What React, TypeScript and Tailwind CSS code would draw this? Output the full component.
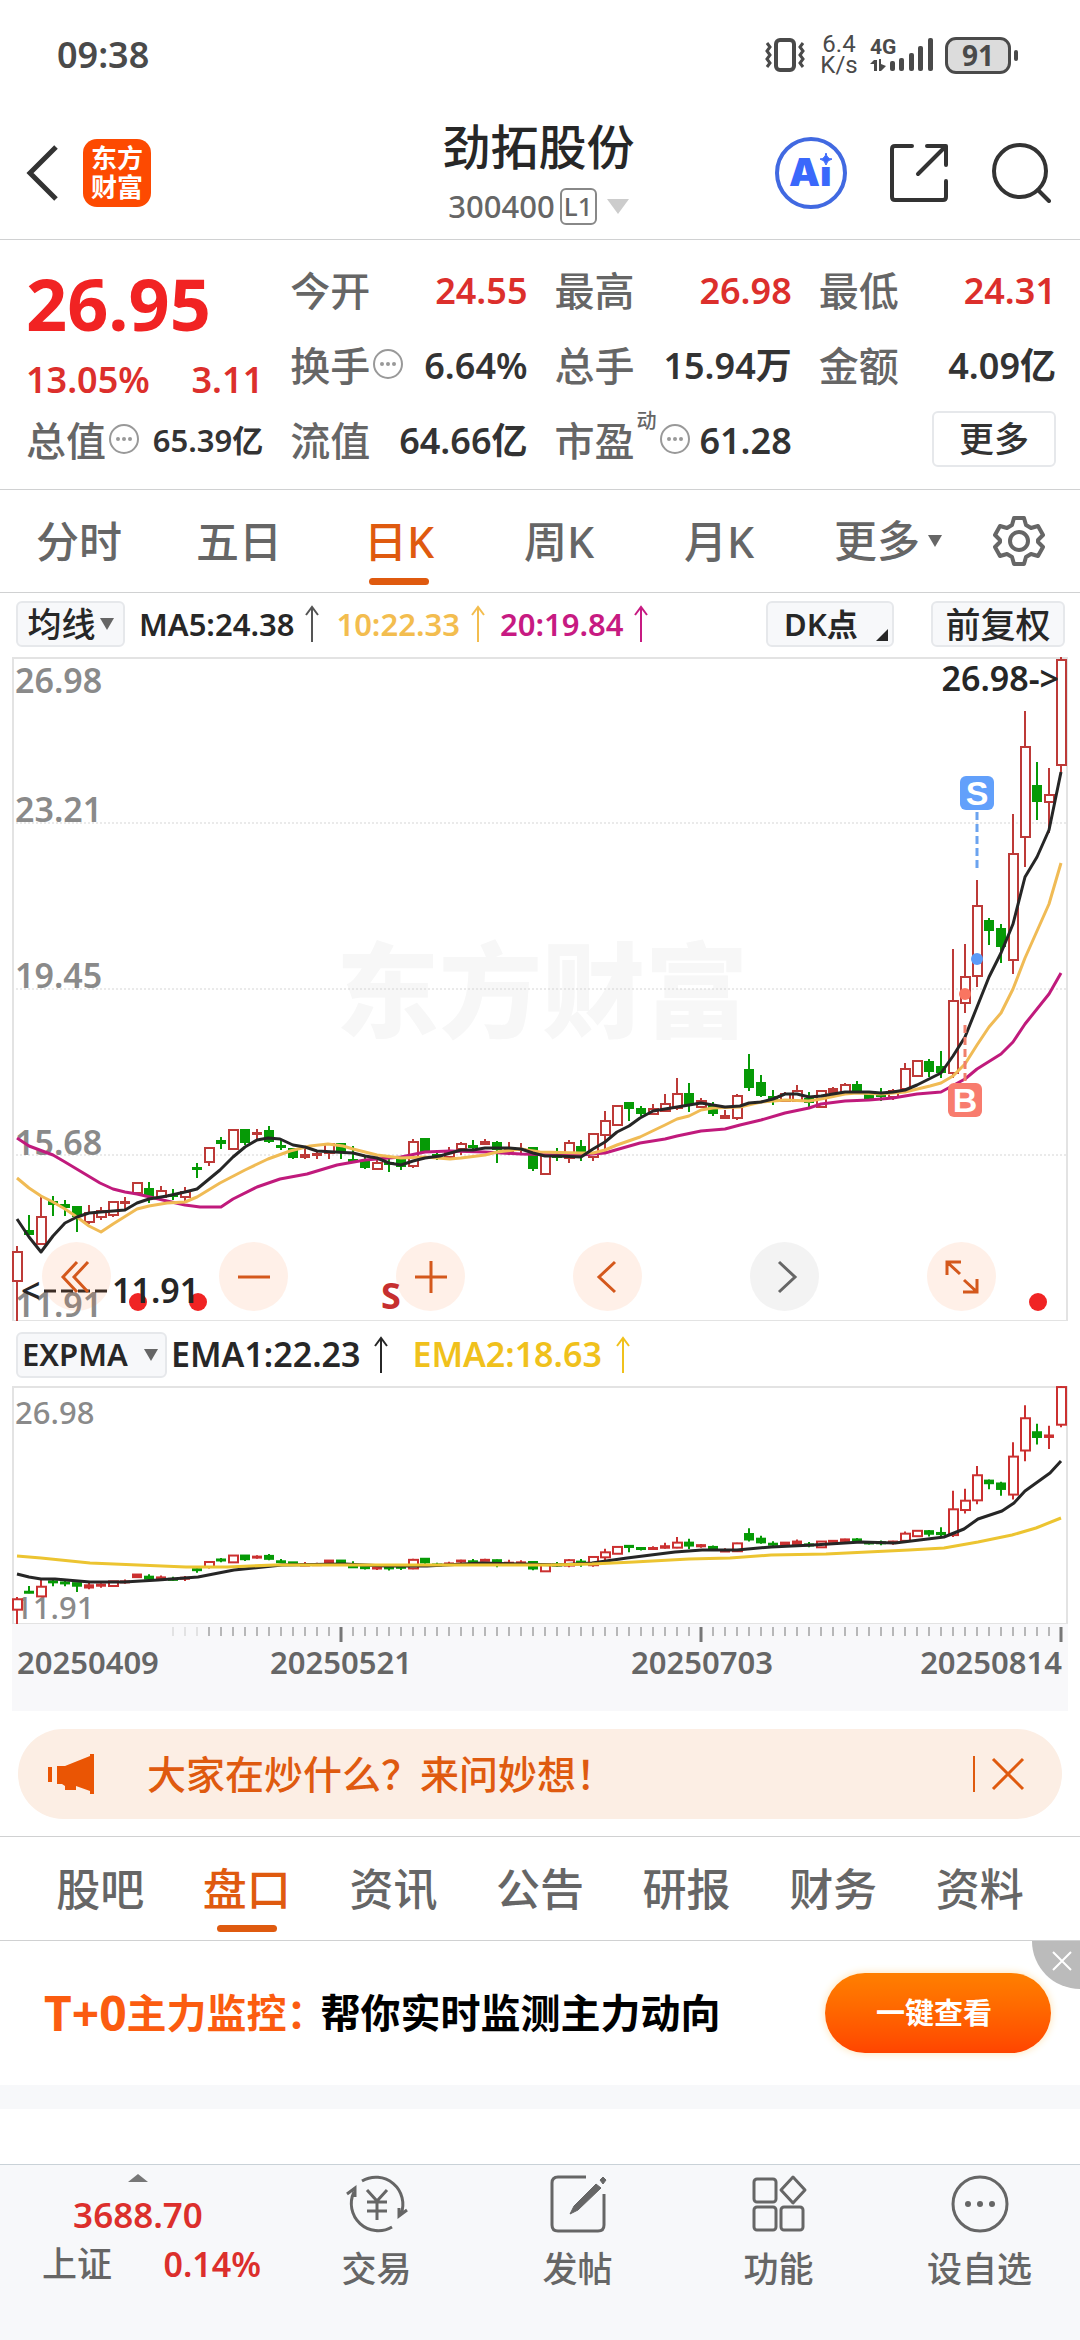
import { useState } from 'react'
import type { ReactNode } from 'react'
import { clsx } from 'clsx'

// up/down flag followed by high, body top, body bottom, low (px below the top of the price pane)
type Candle = ['u' | 'd', number, number, number, number]

const PANE_H = 664
const SUB_H = 238

const candles: Candle[] = [
  ['u', 589, 595, 624, 664], ['d', 558, 574, 578, 578], ['u', 540, 560, 587, 587], ['d', 539, 545, 548, 559],
  ['d', 543, 548, 551, 559], ['d', 550, 550, 560, 575], ['u', 548, 556, 565, 567], ['u', 550, 554, 560, 563],
  ['u', 545, 545, 558, 560], ['u', 540, 545, 547, 552], ['u', 525, 526, 536, 536], ['d', 525, 532, 540, 546],
  ['u', 529, 534, 540, 541], ['d', 532, 538, 540, 543], ['u', 530, 535, 540, 544], ['d', 506, 511, 513, 521],
  ['u', 491, 491, 505, 509], ['d', 480, 484, 487, 492], ['u', 473, 473, 492, 492], ['d', 473, 473, 486, 488],
  ['u', 472, 476, 478, 482], ['d', 469, 474, 485, 486], ['d', 483, 489, 491, 493], ['d', 492, 492, 501, 502],
  ['u', 491, 498, 501, 502], ['u', 493, 497, 499, 502], ['u', 487, 487, 496, 502], ['d', 487, 487, 496, 502],
  ['d', 489, 503, 505, 506], ['d', 500, 505, 511, 512], ['u', 502, 506, 512, 513], ['d', 500, 506, 508, 515],
  ['d', 501, 503, 510, 513], ['u', 482, 485, 509, 511], ['d', 482, 482, 495, 496], ['d', 493, 498, 500, 503],
  ['u', 490, 495, 500, 501], ['u', 485, 487, 492, 498], ['d', 483, 489, 491, 494], ['u', 482, 485, 488, 488],
  ['d', 484, 486, 493, 506], ['u', 485, 493, 495, 498], ['u', 486, 492, 494, 497], ['d', 490, 491, 512, 514],
  ['u', 498, 498, 517, 517], ['d', 491, 498, 501, 504], ['u', 483, 486, 501, 506], ['d', 483, 490, 495, 504],
  ['u', 477, 477, 500, 504], ['u', 454, 464, 478, 497], ['u', 449, 449, 468, 469], ['d', 445, 446, 452, 464],
  ['d', 449, 452, 457, 459], ['u', 447, 452, 457, 457], ['u', 437, 447, 454, 454], ['u', 421, 437, 451, 453],
  ['d', 426, 437, 448, 455], ['u', 441, 444, 450, 451], ['d', 445, 449, 457, 459], ['u', 453, 459, 462, 462],
  ['u', 437, 439, 461, 463], ['d', 397, 413, 431, 434], ['d', 418, 426, 439, 440], ['d', 433, 440, 443, 448],
  ['u', 435, 437, 444, 445], ['u', 428, 434, 444, 445], ['d', 435, 442, 446, 450], ['u', 434, 434, 450, 450],
  ['u', 430, 432, 436, 436], ['u', 426, 428, 435, 435], ['d', 424, 428, 435, 435], ['d', 435, 436, 442, 442],
  ['d', 431, 436, 440, 444], ['u', 432, 434, 440, 443], ['u', 406, 412, 432, 432], ['u', 404, 404, 419, 419],
  ['d', 402, 405, 415, 420], ['d', 394, 410, 416, 421], ['u', 292, 344, 416, 421], ['u', 287, 320, 346, 356],
  ['u', 223, 249, 319, 330], ['d', 261, 264, 274, 288], ['d', 267, 272, 290, 306], ['u', 157, 197, 303, 317],
  ['u', 54, 90, 180, 210], ['d', 105, 129, 145, 163], ['u', 111, 138, 145, 176], ['u', 0, 3, 108, 115],
]

const ma5 =
  '17,562 29,580 41,595 53,579 65,566 77,560 89,556 101,555 125,553 137,546 149,542 167,539 185,535 197,532 220,513 233,500 245,490 257,483 268,481 280,482 293,488 305,490 317,494 353,496 365,499 377,501 389,506 401,508 413,504 425,501 440,499 461,493 473,493 485,491 509,491 521,492 533,496 545,499 557,499 581,500 593,492 605,485 617,475 629,469 640,461 653,454 665,452 677,450 689,448 701,446 713,448 725,450 740,449 749,446 761,445 773,442 785,437 797,437 809,440 821,439 833,437 845,435 869,435 881,436 893,435 905,433 917,428 941,416 953,399 965,380 977,350 989,320 1001,296 1013,267 1025,220 1037,200 1049,173 1061,115'
const ma10 =
  '17,521 29,531 41,539 53,545 65,552 77,560 89,569 101,575 113,567 137,552 149,549 167,546 185,545 197,540 220,526 245,513 268,502 290,494 310,489 328,487 343,489 353,492 377,498 401,501 425,500 450,502 461,501 485,498 497,495 521,492 540,495 581,496 593,496 605,493 617,488 640,480 665,468 677,462 689,459 701,453 713,451 740,450 761,445 785,443 809,444 821,442 845,437 857,436 881,437 905,435 930,429 941,426 953,419 965,407 977,388 989,370 1001,356 1013,332 1025,301 1049,247 1061,206'
const ma20 =
  '17,481 29,489 53,498 65,505 100,526 113,532 125,535 137,537 150,540 167,544 185,548 200,550 221,550 233,542 257,530 280,522 307,517 337,508 365,503 401,500 425,495 450,494 485,495 521,497 557,498 581,498 605,496 640,486 665,482 677,479 701,474 725,472 740,468 761,463 785,456 809,451 821,447 845,444 869,443 893,441 917,437 941,435 965,422 977,412 1001,397 1013,385 1025,367 1049,337 1061,316'
const ema1 =
  '17,188 29,191 41,193 55,193 90,196 124,196 158,194 198,191 234,184 282,179 344,178 386,180 427,180 482,177 523,178 558,179 592,177 627,172 675,166 702,164 737,164 771,161 813,159 861,156 895,157 944,151 964,143 978,133 1002,125 1014,117 1025,105 1050,87 1061,75'
const ema2 =
  '17,170 41,172 90,177 138,179 186,181 227,181 275,179 386,179 551,179 592,178 634,176 689,173 730,172 771,169 826,168 909,164 944,162 978,156 1012,149 1036,142 1061,132'

const candleX = (i: number) => 17 + i * 12

const Candles = ({ scale, red }: { scale: number; red: string }) => (
  <>
    {candles.map(([dir, high, top, bottom, low], i) => {
      const x = candleX(i)
      const color = dir === 'u' ? red : '#069a06'
      const y = top * scale
      const h = Math.max((bottom - top) * scale, 2)
      const hollow = dir === 'u' && h > 4
      return (
        <g key={i}>
          <line x1={x} x2={x} y1={high * scale} y2={low * scale} stroke={color} strokeWidth={2} />
          {hollow ? (
            <rect x={x - 4} y={y} width={9} height={h} fill="#fff" stroke={color} strokeWidth={2} />
          ) : (
            <rect x={x - 5} y={y - 1} width={10} height={h + 1} fill={color} />
          )}
        </g>
      )
    })}
  </>
)

const Line = ({ points, color, width = 3 }: { points: string; color: string; width?: number }) => (
  <polyline points={points} fill="none" stroke={color} strokeWidth={width} strokeLinejoin="round" />
)

const UpArrow = ({ className }: { className?: string }) => (
  <svg viewBox="0 0 14 38" className={clsx('w-[14px] h-[38px] shrink-0', className)} fill="none" stroke="currentColor" strokeWidth="2">
    <path d="M7 2V37M1 10l6-8 6 8" />
  </svg>
)

const Caret = ({ className }: { className?: string }) => (
  <svg viewBox="0 0 14 12" className={clsx('w-[14px] h-[12px] shrink-0', className)} fill="currentColor">
    <path d="M0 0h14L7 12z" />
  </svg>
)

const InfoDots = () => (
  <svg viewBox="0 0 30 30" className="mb-1 ml-[3px] w-[30px] h-[30px] shrink-0" fill="none" stroke="#999" strokeWidth="2">
    <circle cx="15" cy="15" r="14" />
    <g fill="#999" stroke="none">
      <circle cx="9" cy="15" r="2" />
      <circle cx="15" cy="15" r="2" />
      <circle cx="21" cy="15" r="2" />
    </g>
  </svg>
)

const StatusBar = () => (
  <div className="flex h-[110px] items-center justify-between pl-[57px] pr-[62px] text-[#4a4a4a]">
    <span className="text-[36px] font-semibold">09:38</span>
    <div className="flex items-center">
      <svg viewBox="0 0 42 36" className="w-[42px] h-[36px]" fill="none" stroke="currentColor">
        <rect x="12" y="3" width="18" height="30" rx="4" strokeWidth="4" />
        <path d="M3 6l3 4-3 4 3 4-3 4 3 4-3 4M39 6l-3 4 3 4-3 4 3 4-3 4 3 4" strokeWidth="3" />
      </svg>
      <div className="ml-4 flex w-[34px] flex-col items-center font-[Roboto] text-[24px] leading-[21px]">
        <span>6.4</span>
        <span>K/s</span>
      </div>
      <div className="ml-[14px] flex h-[36px] flex-col">
        <div className="flex h-full items-end">
          <div className="flex h-full w-[27px] flex-col items-start justify-between">
            <span className="font-[Roboto] text-[21px] font-bold leading-[20px]">4G</span>
            <svg viewBox="0 0 16 12" className="mb-[2px] w-4 h-3" fill="currentColor">
              <path d="M0 5l4-4h3v11H4V5zM9 0h2v5l5 2-5 5H9z" />
            </svg>
          </div>
          <svg viewBox="0 0 44 36" className="w-[44px] h-[36px] -ml-2" fill="currentColor">
            <rect x="1" y="24" width="5" height="10" rx="2" />
            <rect x="10" y="21" width="5" height="13" rx="2" />
            <rect x="20" y="16" width="5" height="18" rx="2" />
            <rect x="29" y="9" width="5" height="25" rx="2" />
            <rect x="39" y="1" width="5" height="33" rx="2" />
          </svg>
        </div>
      </div>
      <div className="ml-3 flex items-center gap-[3px]">
        <div className="flex h-[37px] w-[66px] items-center justify-center rounded-[11px] border-[3px] border-[#4a4a4a] bg-[#dcdcdc] text-[28px] font-bold leading-none">
          91
        </div>
        <div className="h-[11px] w-1 rounded-full bg-[#4a4a4a]" />
      </div>
    </div>
  </div>
)

const Header = () => (
  <header className="grid h-[130px] grid-cols-[1fr_auto_1fr] items-center border-b border-[#d0d1d2] pb-1 pl-[26px] pr-[29px]">
    <div className="flex items-center gap-6">
      <button aria-label="返回">
        <svg viewBox="0 0 33 56" className="w-[33px] h-[56px]" fill="none" stroke="#333" strokeWidth="5">
          <path d="M30 2L4 28l26 26" />
        </svg>
      </button>
      <div className="flex h-[68px] w-[68px] flex-col items-center justify-center rounded-[14px] bg-[#fd4a01] text-[26px] font-bold leading-[29px] text-white">
        <span>东方</span>
        <span>财富</span>
      </div>
    </div>
    <div className="flex flex-col items-center gap-[11px]">
      <h1 className="text-[48px] font-medium leading-[56px] text-[#272727]">劲拓股份</h1>
      <div className="flex h-[40px] items-center text-[31px] font-medium text-[#666]">
        <span>300400</span>
        <span className="ml-[5px] flex h-[37px] w-[37px] items-center justify-center rounded-md border-2 border-[#888] text-[26px]">L1</span>
        <svg viewBox="0 0 22 15" className="ml-[10px] w-[22px] h-[15px]" fill="#ccc">
          <path d="M0 0h22L11 15z" />
        </svg>
      </div>
    </div>
    <div className="flex items-center justify-end gap-[43px]">
      <button aria-label="Ai">
        <svg viewBox="0 0 72 72" className="w-[72px] h-[72px]">
          <circle cx="36" cy="36" r="34" fill="none" stroke="#4169e1" strokeWidth="4" />
          <text x="14" y="49" fontSize="39" fontWeight="900" fill="#3a68fb" className="font-[Inter]">
            Ai
          </text>
          <rect x="43" y="14" width="16" height="16" fill="#fff" />
          <path d="M51 16q1 6 6 6-5 1-6 6-1-5-6-6 5 0 6-6z" fill="#3a68fb" stroke="#3a68fb" />
        </svg>
      </button>
      <button aria-label="分享">
        <svg viewBox="0 0 58 58" className="w-[58px] h-[58px]" fill="none" stroke="#333" strokeWidth="4" strokeLinecap="round" strokeLinejoin="round">
          <path d="M22 2H5Q2 2 2 5v48q0 3 3 3h48q3 0 3-3V37M37 2h19v19M55 3L28 30" />
        </svg>
      </button>
      <button aria-label="搜索">
        <svg viewBox="0 0 60 60" className="w-[60px] h-[60px]" fill="none" stroke="#333" strokeWidth="4" strokeLinecap="round">
          <circle cx="29" cy="28" r="26" />
          <path d="M47 47l11 11" />
        </svg>
      </button>
    </div>
  </header>
)

type StatProps = { label: string; value: string; red?: boolean; info?: boolean; sup?: string; small?: boolean }

const Stat = ({ label, value, red, info, sup, small }: StatProps) => (
  <div className="flex h-[75px] items-center justify-between">
    <div className="flex items-center">
      <span className="text-[40px] text-[#666]">{label}</span>
      {sup && <span className="-mt-10 ml-[2px] text-[20px] text-[#666]">{sup}</span>}
      {info && <InfoDots />}
    </div>
    <span className={clsx('font-semibold', small ? 'text-[31px]' : 'text-[36px]', red ? 'text-[#dc2f2c]' : 'text-[#333]')}>{value}</span>
  </div>
)

const Quote = () => (
  <section className="grid grid-cols-4 gap-x-[27px] border-b border-[#d0d1d2] pb-[11px] pl-[26px] pr-6 pt-[13px] font-medium">
    <div>
      <div className="flex h-[104px] items-center pb-1 text-[72px] font-bold text-[#f12323]">26.95</div>
      <div className="flex h-[46px] items-center justify-between text-[36px] font-semibold text-[#dc2f2c]">
        <span>13.05%</span>
        <span>3.11</span>
      </div>
      <Stat label="总值" value="65.39亿" info small />
    </div>
    <div>
      <Stat label="今开" value="24.55" red />
      <Stat label="换手" value="6.64%" info />
      <Stat label="流值" value="64.66亿" />
    </div>
    <div>
      <Stat label="最高" value="26.98" red />
      <Stat label="总手" value="15.94万" />
      <Stat label="市盈" value="61.28" sup="动" info />
    </div>
    <div>
      <Stat label="最低" value="24.31" red />
      <Stat label="金额" value="4.09亿" />
      <div className="flex h-[75px] items-center justify-end">
        <button className="mb-1 h-[56px] w-[124px] rounded-md border-2 border-[#e6e8eb] text-[35px] leading-none text-[#333]">更多</button>
      </div>
    </div>
  </section>
)

const periods = ['分时', '五日', '日K', '周K', '月K']

const PeriodTabs = () => {
  const [active, setActive] = useState('日K')
  return (
    <nav className="grid h-[103px] grid-cols-[160fr_160fr_160fr_160fr_160fr_176fr_104fr] border-b border-[#d0d1d2] text-[43px] font-medium text-[#666]">
      {periods.map((p) => (
        <button
          key={p}
          onClick={() => setActive(p)}
          className={clsx('flex flex-col items-center justify-end pb-[7px] pr-[2px]', p === active && 'text-[#df5a0f]')}
        >
          <span className="leading-[64px]">{p}</span>
          <span className={clsx('mt-1 h-[7px] w-[60px] rounded-full', p === active && 'bg-[#df5a0f]')} />
        </button>
      ))}
      <button className="flex items-center justify-center gap-2">
        更多
        <Caret />
      </button>
      <button aria-label="设置" className="flex items-center justify-center pr-[18px]">
        <svg viewBox="0 0 52 52" className="w-[52px] h-[52px]" fill="none" stroke="#666" strokeWidth="4" strokeLinejoin="round">
          <path d="M21 3h10l2 7 5 3 7-2 5 9-5 5v2l5 5-5 9-7-2-5 3-2 7H21l-2-7-5-3-7 2-5-9 5-5v-2l-5-5 5-9 7 2 5-3z" />
          <circle cx="26" cy="26" r="9" />
        </svg>
      </button>
    </nav>
  )
}

const chip = 'flex h-[46px] items-center rounded-md border-2 border-[#e6e8eb] bg-[#f7f8fa] leading-none text-[#272727]'

const MaBar = () => (
  <div className="flex h-[64px] items-center pb-1 pl-4 pr-[15px] pt-[2px] text-[31px] font-semibold">
    <button className={clsx(chip, 'w-[109px] justify-center gap-1 text-[34px] font-medium')}>
      均线
      <Caret className="text-[#666]" />
    </button>
    <span className="ml-[14px] text-[#272727]">MA5:24.38</span>
    <UpArrow className="ml-[11px] text-[#555]" />
    <span className="ml-[17px] text-[#f3bd4f]">10:22.33</span>
    <UpArrow className="ml-[11px] text-[#f3bd4f]" />
    <span className="ml-[15px] text-[#c71a82]">20:19.84</span>
    <UpArrow className="ml-[11px] text-[#c71a82]" />
    <button className={clsx(chip, 'ml-auto w-[128px] justify-between pl-4 pr-1')}>
      DK点
      <svg viewBox="0 0 12 12" className="mb-1 w-3 h-3 self-end" fill="#272727">
        <path d="M12 0v12H0z" />
      </svg>
    </button>
    <button className={clsx(chip, 'ml-[37px] w-[134px] justify-center text-[35px] font-medium')}>前复权</button>
  </div>
)

const RoundButton = ({ label, muted, children }: { label: string; muted?: boolean; children: ReactNode }) => (
  <button
    aria-label={label}
    className={clsx('flex h-[69px] w-[69px] items-center justify-center rounded-full', muted ? 'bg-[#888]/10 text-[#666]' : 'bg-[#fd6a20]/10 text-[#d4581c]')}
  >
    <svg viewBox="0 0 36 36" className="w-9 h-9" fill="none" stroke="currentColor" strokeWidth="3">
      {children}
    </svg>
  </button>
)

const gridLabels = [
  { text: '26.98', y: 36 },
  { text: '23.21', y: 165 },
  { text: '19.45', y: 331 },
  { text: '15.68', y: 498 },
  { text: '11.91', y: 660 },
]

const PriceChart = () => (
  <div className="relative mx-3">
    <svg viewBox={`12 0 1056 ${PANE_H}`} className="block w-full" fontWeight="600">
      <text x="542" y="373" fontSize="103" fontWeight="900" textAnchor="middle" fill="#f7f7f7">
        东方财富
      </text>
      {[166, 332, 498].map((y) => (
        <line key={y} x1="12" x2="1067" y1={y} y2={y} stroke="#d5d5d5" strokeWidth="1" strokeDasharray="2 2" />
      ))}
      <rect x="13" y="1" width="1054" height="663" fill="none" stroke="#e3e3e3" strokeWidth="2" />
      {gridLabels.map((l) => (
        <text key={l.text} x="15" y={l.y} fontSize="34" fill="#8a8a8a">
          {l.text}
        </text>
      ))}
      <Candles scale={1} red="#bd3a38" />
      <g fill="#f02424">
        <circle cx="138" cy="645" r="9" />
        <circle cx="198" cy="645" r="9" />
        <circle cx="1038" cy="645" r="9" />
      </g>
      <Line points={ma20} color="#c01a7c" />
      <Line points={ma10} color="#f0bb55" />
      <Line points={ma5} color="#262626" />

      {/* low / high markers */}
      <text x="21" y="646" fontSize="34" fill="#262626">
        &lt;
      </text>
      <line x1="44" x2="108" y1="634" y2="634" stroke="#262626" strokeWidth="3" strokeDasharray="12 5" />
      <text x="112" y="646" fontSize="34" fill="#262626">
        11.91
      </text>
      <text x="1059" y="34" fontSize="34" textAnchor="end" fill="#262626">
        26.98-&gt;
      </text>
      <text x="391" y="652" fontSize="36" fontWeight="700" textAnchor="middle" fill="#c62f2f">
        S
      </text>

      {/* trade signals */}
      <line x1="977" x2="977" y1="155" y2="212" stroke="#6ba3ef" strokeWidth="3" strokeDasharray="8 4" />
      <rect x="960" y="119" width="34" height="34" rx="6" fill="#62a0fb" />
      <circle cx="977" cy="302" r="6" fill="#5b9bf8" />
      <line x1="965" x2="965" y1="368" y2="424" stroke="#f07f6c" strokeWidth="3" strokeDasharray="8 4" />
      <rect x="948" y="426" width="34" height="34" rx="6" fill="#f87c6e" />
      <circle cx="965" cy="337" r="6" fill="#f97561" />
      <g fontSize="34" fontWeight="700" textAnchor="middle" fill="#fff" className="font-['Liberation_Sans']">
        <text x="977" y="148">S</text>
        <text x="965" y="455">B</text>
      </g>
    </svg>
    <div className="absolute bottom-[10px] left-[30px] right-[72px] flex justify-between">
      <RoundButton label="最早">
        <path d="M18 3L4 18l14 15M29 3L15 18l14 15" />
      </RoundButton>
      <RoundButton label="缩小">
        <path d="M2 18h32" />
      </RoundButton>
      <RoundButton label="放大">
        <path d="M2 18h32M18 2v32" />
      </RoundButton>
      <RoundButton label="左移">
        <path d="M25 3L9 18l16 15" />
      </RoundButton>
      <RoundButton label="右移" muted>
        <path d="M12 3l16 15-16 15" />
      </RoundButton>
      <RoundButton label="全屏">
        <path d="M3 16V3h14M3 3l13 12M33 20v13H19M33 33L20 21" />
      </RoundButton>
    </div>
  </div>
)

const dateMarks = [
  { text: '20250409', x: 17, anchor: 'start' },
  { text: '20250521', x: 341, anchor: 'middle' },
  { text: '20250703', x: 702, anchor: 'middle' },
  { text: '20250814', x: 1062, anchor: 'end' },
] as const

const ExpmaChart = () => (
  <>
    <div className="flex h-[65px] items-center pl-4 pt-[2px] text-[34px] font-semibold">
      <button className={clsx(chip, 'w-[151px] justify-between pl-1 pr-[7px] text-[31px]')}>
        EXPMA
        <Caret className="text-[#666]" />
      </button>
      <span className="ml-1 text-[#272727]">EMA1:22.23</span>
      <UpArrow className="ml-[14px] text-[#272727]" />
      <span className="ml-6 text-[#f0c11c]">EMA2:18.63</span>
      <UpArrow className="ml-[14px] text-[#f0c11c]" />
    </div>
    <div className="mx-3">
      <svg viewBox={`12 0 1056 ${SUB_H}`} className="block w-full" fontWeight="500">
        <rect x="13" y="1" width="1054" height="237" fill="none" stroke="#e3e3e3" strokeWidth="2" />
        <text x="15" y="38" fontSize="31" fill="#8a8a8a">
          26.98
        </text>
        <text x="15" y="233" fontSize="31" fill="#8a8a8a">
          11.91
        </text>
        <Candles scale={SUB_H / PANE_H} red="#cb3030" />
        <Line points={ema1} color="#262626" />
        <Line points={ema2} color="#ecc431" />
      </svg>
      <svg viewBox="12 0 1056 87" className="block w-full bg-[#f8f8fa]" fontWeight="600">
        {candles.map((_, i) => {
          if (i < 13) return null
          const major = i % 30 === 27
          return (
            <line
              key={i}
              x1={candleX(i)}
              x2={candleX(i)}
              y1={3}
              y2={major ? 18 : 12}
              stroke={i < 16 ? '#ccc' : '#777'}
              strokeWidth={major ? 3 : 1}
            />
          )
        })}
        {dateMarks.map((d) => (
          <text key={d.text} x={d.x} y="50" fontSize="31" textAnchor={d.anchor} fill="#666">
            {d.text}
          </text>
        ))}
      </svg>
    </div>
  </>
)

const AskBanner = () => (
  <div className="mx-[18px] mb-[17px] mt-[18px] flex h-[90px] items-center rounded-full bg-[#fceee4] pl-[30px] pr-[37px] text-[#df5a0f]">
    <svg viewBox="0 0 46 40" className="w-[46px] h-[40px]" fill="#ea5504">
      <path d="M0 13h4v15H0zM9 12h8L42 2V0h4v40h-4v-3l-14-5v4H17v-4l-3-2H9z" />
    </svg>
    <a href="#ask" className="ml-[53px] text-[39px] font-medium leading-[56px]">
      大家在炒什么？来问妙想！
    </a>
    <div className="ml-auto h-9 w-[2px] bg-[#df5a0f]" />
    <button aria-label="关闭" className="ml-4">
      <svg viewBox="0 0 34 34" className="w-[34px] h-[34px]" fill="none" stroke="currentColor" strokeWidth="3">
        <path d="M2 2l30 30M32 2L2 32" />
      </svg>
    </button>
  </div>
)

const sections = ['股吧', '盘口', '资讯', '公告', '研报', '财务', '资料']

const SectionTabs = () => {
  const [active, setActive] = useState('盘口')
  return (
    <nav className="grid h-[105px] grid-cols-7 border-y border-[#d0d1d2] px-[27px] text-[44px] font-medium text-[#666]">
      {sections.map((s) => (
        <button
          key={s}
          onClick={() => setActive(s)}
          className={clsx('flex flex-col items-center justify-end pb-[8px]', s === active && 'text-[#df5a0f]')}
        >
          <span className="leading-[64px]">{s}</span>
          <span className={clsx('mt-1 h-[7px] w-[60px] rounded-full', s === active && 'bg-[#df5a0f]')} />
        </button>
      ))}
    </nav>
  )
}

const Promo = () => (
  <div className="relative flex h-[144px] items-center justify-between pl-[44px] pr-[29px]">
    <p className="flex items-center text-[40px] font-bold leading-none text-black">
      <span className="text-[48px] text-[#fb5c10]">T+0</span>
      <span className="-mr-[6px] text-[#fb5c10]">主力监控：</span>
      <span>帮你实时监测主力动向</span>
    </p>
    <button className="h-[80px] w-[226px] rounded-full bg-linear-to-b from-[#ff7f00] to-[#ff4400] pr-2 text-[29px] font-bold text-white shadow-[0_0_8px_#ffe2b0]">
      一键查看
    </button>
    <button aria-label="关闭广告" className="absolute right-0 top-0 flex h-[48px] w-[48px] items-center justify-center rounded-bl-full bg-[#bbb] pb-2 pl-3">
      <svg viewBox="0 0 20 20" className="w-5 h-5" fill="none" stroke="#fff" strokeWidth="2">
        <path d="M1 1l18 18M19 1L1 19" />
      </svg>
    </button>
  </div>
)

const NavButton = ({ label, children }: { label: string; children: ReactNode }) => (
  <button className="flex flex-col items-center pt-[7px]">
    <svg viewBox="0 0 64 64" className="w-[64px] h-[64px]" fill="none" stroke="#666" strokeWidth="3">
      {children}
    </svg>
    <span className="mt-2 leading-[50px]">{label}</span>
  </button>
)

const BottomNav = () => (
  <nav className="mt-auto grid h-[176px] grid-cols-[276fr_201fr_201fr_201fr_201fr] border-t border-[#c9d2d8] bg-[#f7f8fa] text-[35px] font-medium text-[#666]">
    <button className="flex flex-col items-center pt-[9px]">
      <svg viewBox="0 0 20 8" className="w-5 h-2" fill="#777">
        <path d="M10 0l10 8H0z" />
      </svg>
      <span className="mt-2 leading-[50px] font-semibold text-[#dc2f2c]">3688.70</span>
      <span className="flex w-full items-center justify-between pl-[42px] pr-[15px] leading-[48px]">
        上证<span className="text-[34px] font-semibold text-[#dc2f2c]">0.14%</span>
      </span>
    </button>
    <NavButton label="交易">
      <path d="M17 9A27 27 0 0 1 56 42M47 55A27 27 0 0 1 9 20M2 22l8-6v9M62 38l-8 6v-8" />
      <path d="M22 18l10 11 10-11M22 30h20M22 39h20M32 29v19" />
    </NavButton>
    <NavButton label="发帖">
      <path d="M40 5H12q-6 0-6 6v42q0 6 6 6h40q6 0 6-6V22" />
      <path d="M50 12L55 16 32 38 24 42 28 34zM54 8l3-3 3 3-3 4z" fill="#666" strokeWidth="1" />
    </NavButton>
    <NavButton label="功能">
      <rect x="7" y="7" width="22" height="23" rx="3" />
      <rect x="7" y="35" width="22" height="23" rx="3" />
      <rect x="34" y="35" width="22" height="23" rx="3" />
      <path d="M46 5l12 13-12 13-12-13z" strokeLinejoin="round" />
    </NavButton>
    <NavButton label="设自选">
      <circle cx="32" cy="32" r="27" />
      <g fill="#666" stroke="none">
        <circle cx="20" cy="32" r="3" />
        <circle cx="32" cy="32" r="3" />
        <circle cx="44" cy="32" r="3" />
      </g>
    </NavButton>
  </nav>
)

const App = () => {
  return (
    <div className="flex min-h-screen flex-col bg-white font-['Noto_Sans','Noto_Sans_CJK_SC',sans-serif] whitespace-nowrap">
      <StatusBar />
      <Header />
      <main>
        <Quote />
        <PeriodTabs />
        <MaBar />
        <PriceChart />
        <ExpmaChart />
        <AskBanner />
        <SectionTabs />
        <Promo />
        <div className="h-6 bg-[#f7f8fa]" />
      </main>
      <BottomNav />
    </div>
  )
}

export default App
